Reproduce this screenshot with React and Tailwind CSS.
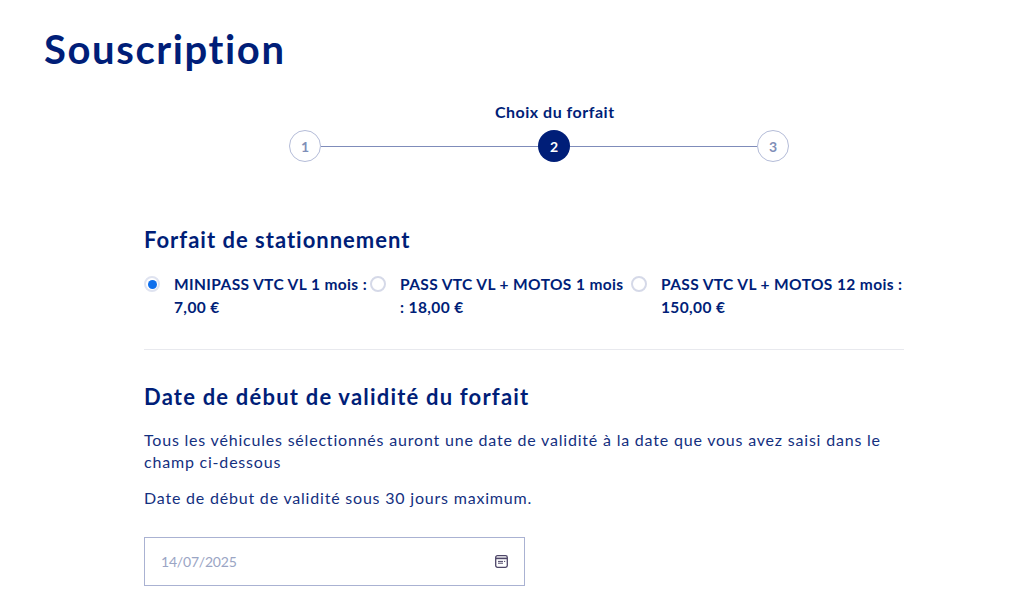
const forfaits = [
  { label: 'MINIPASS VTC VL 1 mois : 7,00 €', width: 'w-[226px]', checked: true },
  { label: 'PASS VTC VL + MOTOS 1 mois : 18,00 €', width: 'w-[261px] pr-[6px]' },
  { label: 'PASS VTC VL + MOTOS 12 mois : 150,00 €', width: 'w-[273px]' },
];

const Step = ({ n, active }) => (
  <div
    className={`w-8 h-8 shrink-0 rounded-full flex items-center justify-center text-[14px] font-bold ${
      active ? 'bg-[#001e78] text-white' : 'border border-[#b4bcd8] text-[#7f8fb8]'
    }`}
  >
    {n}
  </div>
);

const Radio = ({ checked }) => (
  <div
    className={`w-4 h-4 mt-[3px] shrink-0 rounded-full flex items-center justify-center border-2 ${
      checked ? 'border-[#dfe3f0]' : 'border-[#d5d9e8]'
    }`}
  >
    {checked && <div className="w-[9px] h-[9px] rounded-full bg-[#0f6fec]" />}
  </div>
);

const App = () => {
  return (
    <div className="w-[1024px] h-[603px] overflow-hidden bg-white text-[#001e78] font-['Lato',sans-serif]">
      <h1 className="pl-[44px] pt-[24px] text-[40px] leading-[50px] font-bold tracking-[1.6px]">Souscription</h1>

      {/* Stepper */}
      <div className="mt-[28px] ml-[289px] w-[500px]">
        <div className="ml-[206px] w-[119px] text-center whitespace-nowrap text-[16px] leading-[20px] font-bold tracking-[0.5px]">Choix du forfait</div>
        <div className="mt-[8px] flex items-center">
          <Step n="1" />
          <div className="flex-1 h-px bg-[#7f8cba]" />
          <Step n="2" active />
          <div className="w-[187px] h-px bg-[#7f8cba]" />
          <Step n="3" />
        </div>
      </div>

      <div className="ml-[144px] w-[760px] mt-[64px]">
        <h2 className="text-[22px] leading-[28px] font-bold tracking-[1px]">Forfait de stationnement</h2>

        <div className="mt-[19px] flex pb-[30px] border-b border-[#e8e9ee]">
          {forfaits.map((f, i) => (
            <label key={i} className={`${f.width} flex gap-[14px] text-[15.5px] leading-[23px] font-bold tracking-[0.38px]`}>
              <Radio checked={f.checked} />
              <span>{f.label}</span>
            </label>
          ))}
        </div>

        <h2 className="mt-[33px] text-[22px] leading-[28px] font-bold tracking-[1.2px]">Date de début de validité du forfait</h2>

        <p className="mt-[18px] text-[16px] leading-[22px] tracking-[0.8px] text-[#14307f] w-[750px]">
          Tous les véhicules sélectionnés auront une date de validité à la date que vous avez saisi dans le champ ci-dessous
        </p>
        <p className="mt-[14px] text-[16px] leading-[22px] tracking-[0.8px] text-[#14307f]">
          Date de début de validité sous 30 jours maximum.
        </p>

        <div className="mt-[28px] w-[381px] h-[49px] border border-[#aab2d2] flex items-center justify-between pl-[16px] pr-[16px]">
          <span className="text-[14px] text-[#9aa5c4] tracking-[-0.2px]">14/07/2025</span>
          <svg width="13" height="13" viewBox="0 0 13 13" fill="none" stroke="#4e4668" strokeWidth="1.3">
            <rect x="0.7" y="0.7" width="11.6" height="11.6" rx="1.8" />
            <path d="M1 3.4h11" strokeWidth="1.6" />
            <path d="M3 6.4h5M3 8.2h5" strokeWidth="1" />
            <path d="M9 6.4h1.2" strokeWidth="1" />
          </svg>
        </div>
      </div>
    </div>
  );
};

export default App;
